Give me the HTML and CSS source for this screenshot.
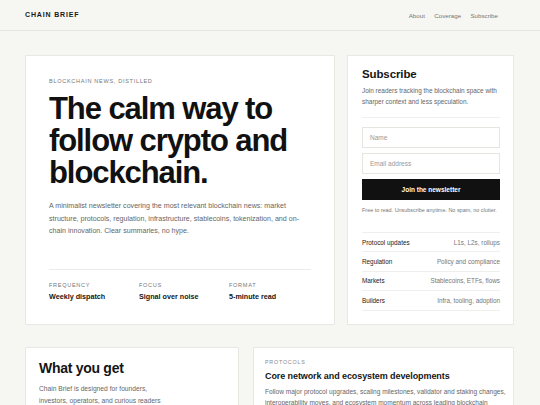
FILE: index.html
```html
<!DOCTYPE html>
<html lang="en">
<head>
<meta charset="utf-8">
<title>Chain Brief</title>
<link rel="stylesheet" href="styles.css">
</head>
<body>
<header class="site-header">
  <div class="logo">CHAIN BRIEF</div>
  <nav class="nav">
    <a href="#">About</a>
    <a href="#">Coverage</a>
    <a href="#">Subscribe</a>
  </nav>
</header>
<main class="page">
  <section class="top-grid">
    <article class="card hero">
      <div class="eyebrow">BLOCKCHAIN NEWS, DISTILLED</div>
      <h1 class="headline">The calm way to follow crypto and blockchain.</h1>
      <p class="lead">A minimalist newsletter covering the most relevant blockchain news: market structure, protocols, regulation, infrastructure, stablecoins, tokenization, and on-chain innovation. Clear summaries, no hype.</p>
      <div class="stats">
        <div class="stat"><div class="stat-label">FREQUENCY</div><div class="stat-value">Weekly dispatch</div></div>
        <div class="stat"><div class="stat-label">FOCUS</div><div class="stat-value">Signal over noise</div></div>
        <div class="stat"><div class="stat-label">FORMAT</div><div class="stat-value">5-minute read</div></div>
      </div>
    </article>
    <aside class="card subscribe">
      <h2 class="sub-title">Subscribe</h2>
      <p class="sub-text">Join readers tracking the blockchain space with sharper context and less speculation.</p>
      <form class="form">
        <input class="field" type="text" placeholder="Name">
        <input class="field" type="email" placeholder="Email address">
        <button class="btn" type="button">Join the newsletter</button>
      </form>
      <p class="fine">Free to read. Unsubscribe anytime. No spam, no clutter.</p>
      <ul class="topics">
        <li><span class="t-name">Protocol updates</span><span class="t-desc">L1s, L2s, rollups</span></li>
        <li><span class="t-name">Regulation</span><span class="t-desc">Policy and compliance</span></li>
        <li><span class="t-name">Markets</span><span class="t-desc">Stablecoins, ETFs, flows</span></li>
        <li><span class="t-name">Builders</span><span class="t-desc">Infra, tooling, adoption</span></li>
      </ul>
    </aside>
  </section>
  <section class="bottom-grid">
    <article class="card what">
      <h2 class="what-title">What you get</h2>
      <p class="what-text">Chain Brief is designed for founders, investors, operators, and curious readers who want the essentials without the noise.</p>
    </article>
    <article class="card proto">
      <div class="proto-eyebrow">PROTOCOLS</div>
      <h3 class="proto-title">Core network and ecosystem developments</h3>
      <p class="proto-text">Follow major protocol upgrades, scaling milestones, validator and staking changes, interoperability moves, and ecosystem momentum across leading blockchain networks.</p>
    </article>
  </section>
</main>
</body>
</html>
```

FILE: styles.css
```css
* { box-sizing: border-box; }
html, body { margin: 0; padding: 0; }
body {
  background: #f6f6f2;
  font-family: "Liberation Sans", Arial, sans-serif;
  color: #151515;
  overflow: hidden;
}
.site-header {
  height: 31px;
  border-bottom: 1px solid #e6e6e1;
  display: flex;
  align-items: center;
  justify-content: space-between;
  padding: 0 42px 0 25px;
}
.logo {
  font-size: 7px;
  font-weight: 700;
  letter-spacing: 0.12em;
  color: #1a1a1a;
  margin-top: -1px;
}
.nav { display: flex; gap: 9.4px; }
.nav a {
  font-size: 6.2px;
  color: #777;
  text-decoration: none;
}
.page { padding: 24px 26px 0 25px; }
.top-grid {
  display: grid;
  grid-template-columns: 310px 1fr;
  gap: 12px;
}
.card {
  background: #fff;
  border: 1px solid #e9e9e4;
}
.hero { padding: 22px 23px 23px 23px; }
.eyebrow {
  font-size: 5.6px;
  letter-spacing: 0.12em;
  color: #777;
  margin-bottom: 9px;
}
.headline {
  margin: 0;
  font-size: 31px;
  line-height: 32px;
  letter-spacing: -0.035em;
  font-weight: 700;
  color: #111;
}
.lead {
  margin: 11px 0 0 0;
  font-size: 7.1px;
  line-height: 12.5px;
  color: #666;
}
.stats {
  margin-top: 31px;
  border-top: 1px solid #ececE8;
  padding-top: 12px;
  display: grid;
  grid-template-columns: 90px 90px 1fr;
}
.stat-label {
  font-size: 5.6px;
  letter-spacing: 0.12em;
  color: #777;
}
.stat-value {
  margin-top: 4px;
  font-size: 7.2px;
  font-weight: 700;
  color: #161616;
}
.subscribe { padding: 12px 13px 13px 14px; }
.sub-title {
  margin: 0;
  font-size: 11.5px;
  font-weight: 700;
  color: #161616;
  letter-spacing: -0.01em;
}
.sub-text {
  margin: 5px 0 0 0;
  font-size: 6.45px;
  line-height: 11px;
  color: #666;
  padding-bottom: 10px;
  border-bottom: 1px solid #efefeb;
}
.form {
  margin-top: 9px;
  display: flex;
  flex-direction: column;
  gap: 5px;
}
.field {
  height: 21px;
  border: 1px solid #e6e6e1;
  background: #fff;
  padding: 0 7px;
  font-family: inherit;
  font-size: 6.5px;
  color: #333;
  outline: none;
}
.field::placeholder { color: #999; }
.btn {
  height: 21px;
  border: none;
  background: #111;
  color: #fff;
  font-family: inherit;
  font-size: 6.5px;
  font-weight: 700;
}
.fine {
  margin: 7px 0 0 0;
  font-size: 5.45px;
  color: #777;
}
.topics {
  list-style: none;
  margin: 19px 0 0 0;
  padding: 0;
  border-top: 1px solid #efefeb;
}
.topics li {
  height: 19.4px;
  display: flex;
  align-items: center;
  justify-content: space-between;
  border-bottom: 1px solid #efefeb;
  font-size: 6.35px;
}
.t-name { color: #222; }
.t-desc { color: #777; }
.bottom-grid {
  margin-top: 22px;
  display: grid;
  grid-template-columns: 214px 1fr;
  gap: 14px;
}
.what { padding: 12px 13px; height: 80px; }
.what-title {
  margin: 0;
  font-size: 14px;
  font-weight: 700;
  letter-spacing: -0.02em;
  color: #141414;
}
.what-text {
  margin: 7px 0 0 0;
  max-width: 130px;
  font-size: 6.7px;
  line-height: 12px;
  color: #666;
}
.proto { padding: 11px 5px 11px 11px; height: 80px; }
.proto-eyebrow {
  font-size: 5.4px;
  letter-spacing: 0.14em;
  color: #888;
}
.proto-title {
  margin: 6px 0 0 0;
  font-size: 9px;
  font-weight: 700;
  color: #161616;
  letter-spacing: -0.01em;
}
.proto-text {
  margin: 5px 0 0 0;
  font-size: 6.55px;
  line-height: 11px;
  color: #666;
}
```
